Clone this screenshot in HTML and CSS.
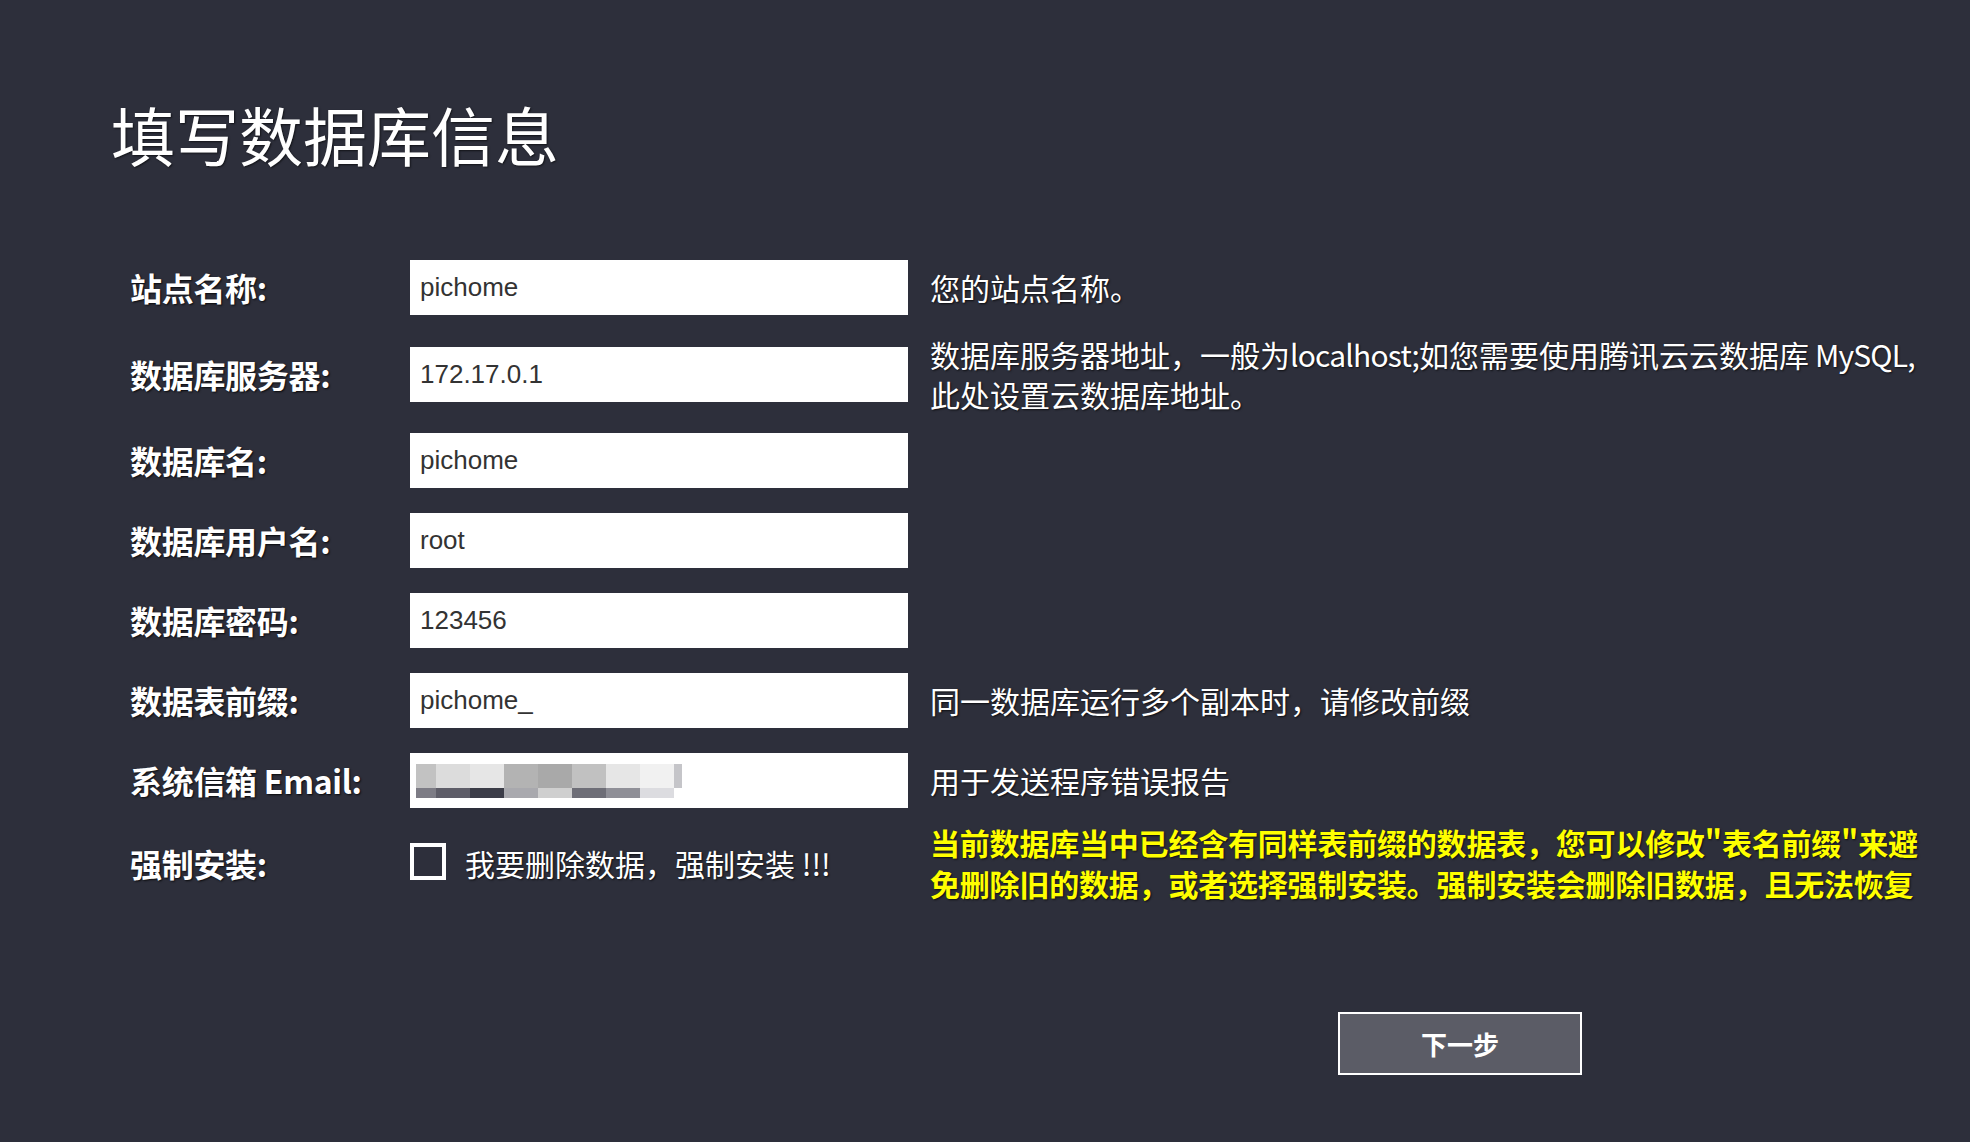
FILE: index.html
```html
<!DOCTYPE html>
<html lang="zh-CN">
<head>
<meta charset="utf-8">
<title>填写数据库信息</title>
<link rel="stylesheet" href="styles.css">
</head>
<body>
<div class="page">
  <h1 class="title">填写数据库信息</h1>
  <div class="form">
    <div class="row">
      <div class="label">站点名称:</div>
      <div class="field"><input class="input" type="text" value="pichome"></div>
      <div class="desc">您的站点名称。</div>
    </div>
    <div class="row row-tall">
      <div class="label">数据库服务器:</div>
      <div class="field"><input class="input" type="text" value="172.17.0.1"></div>
      <div class="desc desc-multi">数据库服务器地址，一般为<span class="latin">localhost;</span>如您需要使用腾讯云云数据库<span class="latin"> MySQL,</span><br>此处设置云数据库地址。</div>
    </div>
    <div class="row">
      <div class="label">数据库名:</div>
      <div class="field"><input class="input" type="text" value="pichome"></div>
      <div class="desc"></div>
    </div>
    <div class="row">
      <div class="label">数据库用户名:</div>
      <div class="field"><input class="input" type="text" value="root"></div>
      <div class="desc"></div>
    </div>
    <div class="row">
      <div class="label">数据库密码:</div>
      <div class="field"><input class="input" type="text" value="123456"></div>
      <div class="desc"></div>
    </div>
    <div class="row">
      <div class="label">数据表前缀:</div>
      <div class="field"><input class="input" type="text" value="pichome_"></div>
      <div class="desc">同一数据库运行多个副本时，请修改前缀</div>
    </div>
    <div class="row">
      <div class="label">系统信箱 Email:</div>
      <div class="field">
        <div class="input input-blur">
          <svg class="blur" width="266" height="34" viewBox="0 0 266 34">
            <rect x="0" y="0" width="20" height="24" fill="#c2c2c2"/>
            <rect x="20" y="0" width="34" height="24" fill="#dcdcdc"/>
            <rect x="54" y="0" width="34" height="24" fill="#e6e6e6"/>
            <rect x="88" y="0" width="34" height="24" fill="#b3b3b3"/>
            <rect x="122" y="0" width="34" height="24" fill="#a9a9a9"/>
            <rect x="156" y="0" width="34" height="24" fill="#c1c1c1"/>
            <rect x="190" y="0" width="34" height="24" fill="#e6e6e6"/>
            <rect x="224" y="0" width="34" height="24" fill="#f1f1f1"/>
            <rect x="258" y="0" width="8" height="24" fill="#c5c5c9"/>
            <rect x="0" y="24" width="20" height="10" fill="#7d7c85"/>
            <rect x="20" y="24" width="34" height="10" fill="#5e5d68"/>
            <rect x="54" y="24" width="34" height="10" fill="#3c3d48"/>
            <rect x="88" y="24" width="34" height="10" fill="#a9a9ae"/>
            <rect x="122" y="24" width="34" height="10" fill="#cfcfcf"/>
            <rect x="156" y="24" width="34" height="10" fill="#6e6e77"/>
            <rect x="190" y="24" width="34" height="10" fill="#8f8f97"/>
            <rect x="224" y="24" width="34" height="10" fill="#dcdce0"/>
          </svg>
        </div>
      </div>
      <div class="desc">用于发送程序错误报告</div>
    </div>
    <div class="row row-last">
      <div class="label">强制安装:</div>
      <div class="field">
        <label class="check">
          <span class="box"></span>
          <span class="check-text">我要删除数据，强制安装 !!!</span>
        </label>
      </div>
      <div class="desc desc-warn">当前数据库当中已经含有同样表前缀的数据表，您可以修改"表名前缀"来避<br>免删除旧的数据，或者选择强制安装。强制安装会删除旧数据，且无法恢复</div>
    </div>
  </div>
  <div class="actions">
    <button class="btn" type="button">下一步</button>
  </div>
</div>
</body>
</html>
```

FILE: styles.css
```css
html, body {
  margin: 0;
  padding: 0;
}
body {
  background: #2d2f3b;
  color: #fff;
  font-family: "Noto Sans CJK SC", "Noto Sans", sans-serif;
  width: 1970px;
  height: 1142px;
  overflow: hidden;
}
.page {
  padding-top: 93px;
}
.title {
  margin: 0;
  padding-left: 111px;
  font-size: 64px;
  line-height: 80px;
  font-weight: normal;
  color: #fff;
  text-shadow: 1px 1px 2px rgba(0, 0, 0, 0.6);
}
.form {
  margin-top: 84px;
  padding-left: 130px;
  display: flex;
  flex-direction: column;
  gap: 19px;
}
.row {
  display: flex;
  align-items: center;
  min-height: 61px;
}
.row-tall {
  margin: -3px 0;
}
.row-last {
  margin-top: -8px;
}
.label {
  width: 280px;
  flex: none;
  font-size: 32px;
  font-weight: bold;
  line-height: 37px;
  letter-spacing: -0.3px;
  text-shadow: 1px 1px 2px rgba(0, 0, 0, 0.8);
}
.field {
  width: 498px;
  flex: none;
}
.input {
  display: block;
  box-sizing: border-box;
  width: 498px;
  height: 55px;
  border: 0;
  margin: 0;
  padding: 0 10px;
  background: #fff;
  color: #333;
  font-family: "Liberation Sans", Arial, sans-serif;
  font-size: 26px;
  outline: none;
}
.input-blur {
  padding: 11px 6px 10px;
}
.blur {
  display: block;
}
.desc {
  margin-left: 22px;
  font-size: 30px;
  line-height: 37px;
  white-space: nowrap;
  text-shadow: 1px 1px 2px rgba(0, 0, 0, 0.7);
}
.desc-multi {
  line-height: 40px;
}
.latin {
  letter-spacing: -0.8px;
}
.desc-warn {
  color: #ffff00;
  font-weight: bold;
  font-size: 30px;
  line-height: 41px;
  letter-spacing: -0.2px;
}
.check {
  display: flex;
  align-items: center;
  gap: 19px;
}
.box {
  box-sizing: border-box;
  width: 36px;
  height: 37px;
  margin-top: -4px;
  border: 4px solid #fff;
  flex: none;
}
.check-text {
  font-size: 30px;
  line-height: 37px;
  text-shadow: 1px 1px 2px rgba(0, 0, 0, 0.7);
}
.actions {
  display: flex;
  justify-content: flex-end;
  padding-right: 388px;
  margin-top: 108px;
}
.btn {
  box-sizing: border-box;
  width: 244px;
  height: 63px;
  border: 2px solid #fff;
  background: #5b5c66;
  color: #fff;
  font-family: "Noto Sans CJK SC", sans-serif;
  font-size: 26px;
  font-weight: bold;
  padding: 0;
  cursor: pointer;
}
```
